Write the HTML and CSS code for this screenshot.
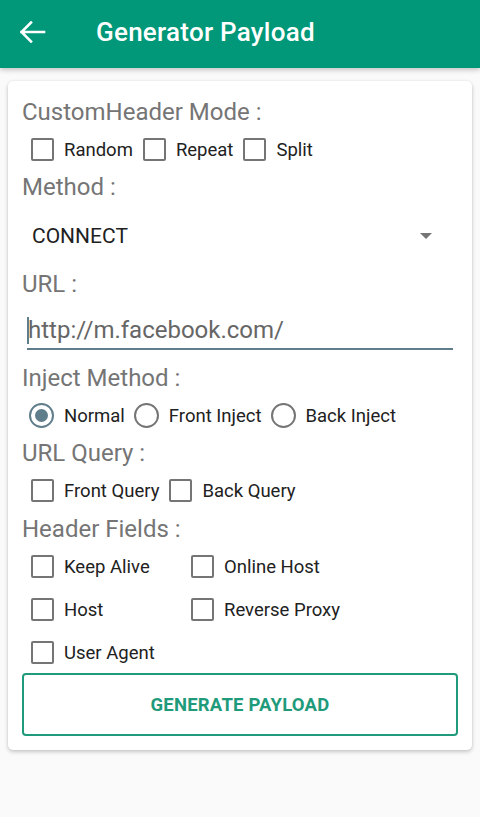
FILE: index.html
```html
<!DOCTYPE html>
<html>
<head>
<meta charset="utf-8">
<link rel="stylesheet" href="styles.css">
</head>
<body>
<header class="appbar">
  <svg class="back" width="26" height="22" viewBox="0 0 26 22"><path d="M1.5 11H24M11 1.5L1.5 11L11 20.5" fill="none" stroke="#fff" stroke-width="2.6" stroke-linecap="square"/></svg>
  <h1 class="title">Generator Payload</h1>
</header>
<main class="card">
  <div class="label">CustomHeader Mode :</div>
  <div class="row">
    <span class="item"><span class="box"></span><span class="txt">Random</span></span>
    <span class="item"><span class="box"></span><span class="txt">Repeat</span></span>
    <span class="item"><span class="box"></span><span class="txt">Split</span></span>
  </div>
  <div class="label">Method :</div>
  <div class="spinner">
    <span class="spin-text">CONNECT</span>
    <span class="arrow"></span>
  </div>
  <div class="label">URL :</div>
  <div class="input">
    <span class="cursor"></span><span class="input-text">http://m.facebook.com/</span>
  </div>
  <div class="label">Inject Method :</div>
  <div class="row radios">
    <span class="item"><span class="radio checked"></span><span class="txt">Normal</span></span>
    <span class="item"><span class="radio"></span><span class="txt">Front Inject</span></span>
    <span class="item"><span class="radio"></span><span class="txt">Back Inject</span></span>
  </div>
  <div class="label">URL Query :</div>
  <div class="row">
    <span class="item"><span class="box"></span><span class="txt">Front Query</span></span>
    <span class="item"><span class="box"></span><span class="txt">Back Query</span></span>
  </div>
  <div class="label lh">Header Fields :</div>
  <div class="grid">
    <span class="item"><span class="box"></span><span class="txt">Keep Alive</span></span>
    <span class="item"><span class="box"></span><span class="txt">Online Host</span></span>
    <span class="item"><span class="box"></span><span class="txt">Host</span></span>
    <span class="item"><span class="box"></span><span class="txt">Reverse Proxy</span></span>
    <span class="item"><span class="box"></span><span class="txt">User Agent</span></span>
  </div>
  <button class="btn">GENERATE PAYLOAD</button>
</main>
</body>
</html>
```
FILE: styles.css
```css
* { box-sizing: border-box; }
html, body { margin: 0; padding: 0; }
body {
  background: #fafafa;
  font-family: Roboto, "Noto Sans", sans-serif;
  width: 480px;
  height: 817px;
  overflow: hidden;
}
.appbar {
  height: 68px;
  background: #009879;
  display: flex;
  align-items: center;
  padding-left: 20px;
  box-shadow: 0 2px 5px rgba(0,0,0,0.22);
  position: relative;
  z-index: 1;
}
.back { display: block; margin-top: -4px; }
.title {
  margin: 0 0 0 50px;
  color: #fff;
  font-size: 26px;
  font-weight: 500;
  margin-top: -4px;
  letter-spacing: 0.25px;
}
.card {
  margin: 13px 8px 0 8px;
  background: #fff;
  border-radius: 5px;
  box-shadow: 0 2px 4px rgba(0,0,0,0.2), 0 0 2px rgba(0,0,0,0.08);
  padding: 16px 14px 14px 14px;
}
.label {
  height: 30px;
  line-height: 30px;
  font-size: 24px;
  color: #757575;
}
.lh { margin-top: 1px; }
.row {
  height: 45px;
  display: flex;
  align-items: center;
  padding-left: 9px;
}
.item {
  display: inline-flex;
  align-items: center;
  margin-right: 10px;
}
.box {
  width: 23px;
  height: 23px;
  border: 2px solid #757575;
  border-radius: 2px;
  margin-right: 10px;
  flex: none;
}
.txt {
  font-size: 18.5px;
  color: #212121;
}
.radios { padding-left: 7px; }
.radios .item { margin-right: 9px; }
.radio {
  width: 25px;
  height: 25px;
  border: 2px solid #757575;
  border-radius: 50%;
  margin-right: 10px;
  flex: none;
  display: flex;
  align-items: center;
  justify-content: center;
}
.radio.checked { border-color: #607d8b; }
.radio.checked::after {
  content: "";
  width: 13px;
  height: 13px;
  border-radius: 50%;
  background: #607d8b;
}
.spinner {
  height: 67px;
  display: flex;
  align-items: center;
  justify-content: space-between;
  padding-left: 10px;
  padding-right: 26px;
}
.spin-text {
  font-size: 21px;
  color: #212121;
}
.arrow {
  width: 0;
  height: 0;
  border-left: 6px solid transparent;
  border-right: 6px solid transparent;
  border-top: 6px solid #757575;
}
.input {
  margin: 0 5px 13px 5px;
  padding-top: 15px;
  height: 51px;
  border-bottom: 2px solid #607d8b;
  display: flex;
  align-items: flex-start;
}
.cursor {
  width: 2px;
  height: 27px;
  background: #607d8b;
  margin-top: 3px;
  flex: none;
}
.input-text {
  font-size: 24px;
  line-height: 32px;
  color: #666;
  margin-left: -1px;
}
.grid {
  margin-top: 1px;
  display: grid;
  grid-template-columns: 160px 1fr;
  grid-auto-rows: 43px;
  padding-left: 9px;
  align-items: center;
}
.btn {
  display: block;
  width: 100%;
  height: 63px;
  margin-top: -1px;
  background: #fff;
  border: 2px solid #1f9b7c;
  border-radius: 4px;
  color: #1f9b7c;
  font-family: Roboto, sans-serif;
  font-size: 18.5px;
  font-weight: 700;
  letter-spacing: 0.2px;
}
```
